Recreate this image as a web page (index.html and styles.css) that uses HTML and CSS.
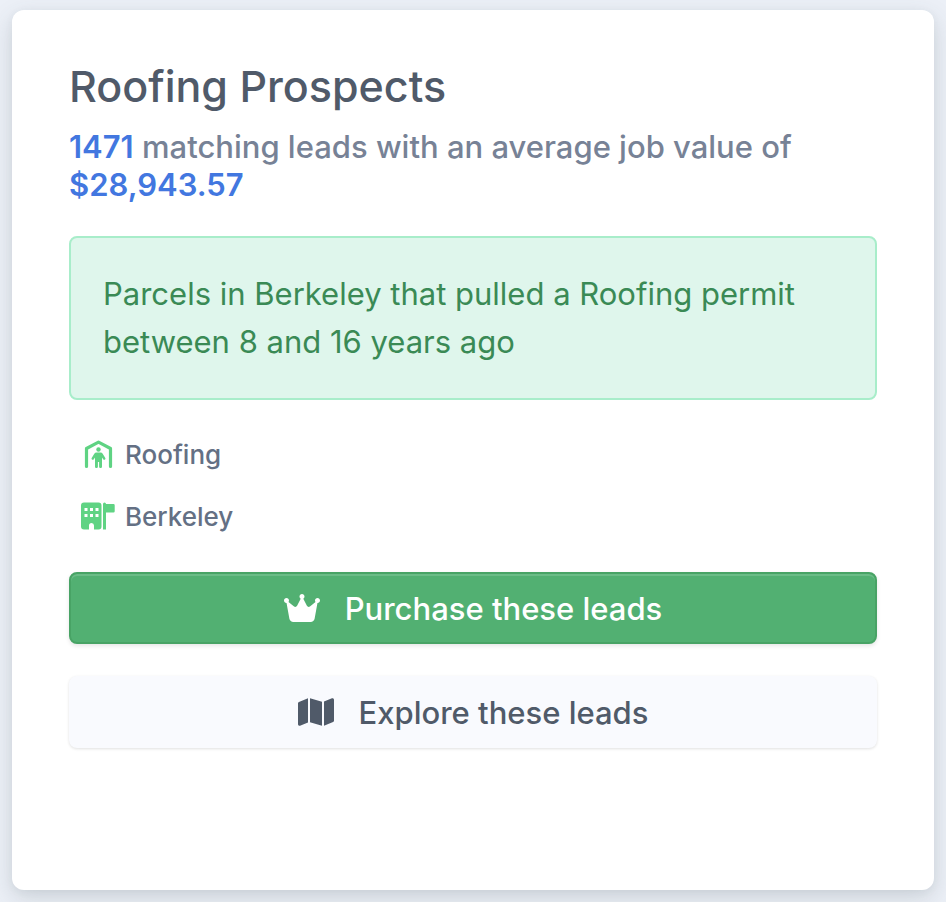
FILE: index.html
```html
<!DOCTYPE html>
<html lang="en">
<head>
<meta charset="utf-8">
<meta name="viewport" content="width=device-width, initial-scale=1">
<title>Roofing Prospects</title>
<link rel="stylesheet" href="styles.css">
</head>
<body>
<main class="card">
  <h1 class="title">Roofing Prospects</h1>
  <p class="summary"><strong>1471</strong> matching leads with an average job value of <strong>$28,943.57</strong></p>
  <p class="notice">Parcels in Berkeley that pulled a Roofing permit between 8 and 16 years ago</p>
  <ul class="tags">
    <li class="tag">
      <svg class="tag-icon" viewBox="0 1 36 32" aria-hidden="true">
        <path d="M6.500 28.500V10.500L18.500 4.200 30.500 10.500V28.500" fill="none" stroke="currentColor" stroke-width="3.200" stroke-linecap="round" stroke-linejoin="round"/>
        <circle cx="18.500" cy="11.500" r="2.200"/>
        <path d="M16.500 14.500h4c1 0 1.700.4 2.200 1.200l2.600 4.200c.8 1.400-1.200 2.700-2.100 1.400L22 19.500V28.500c0 2-2.900 2-2.900 0V24h-1.200V28.500c0 2-2.900 2-2.900 0V19.500L13.800 21.300c-.9 1.300-2.900 0-2.100-1.400l2.600-4.200c.5-.8 1.200-1.200 2.200-1.200z"/>
      </svg>
      <span>Roofing</span>
    </li>
    <li class="tag">
      <svg class="tag-icon" viewBox="0 1 36 32" aria-hidden="true">
        <path fill-rule="evenodd" d="M4 2.500H18.500a3 3 0 0 1 3 3V26.500a3 3 0 0 1-3 3H14V25.500a2.500 2.500 0 0 0-5 0V29.500H4a3 3 0 0 1-3-3V5.500a3 3 0 0 1 3-3zM4.500 8v3h3V8zm5.500 0v3h3V8zm5.500 0v3h3V8zM4.500 14v3h3v-3zm5.500 0v3h3v-3zm5.500 0v3h3v-3z"/>
        <path d="M23 4a1.500 1.500 0 0 1 3 0h7.500a1.200 1.200 0 0 1 1.200 1.200v6.100a1.200 1.200 0 0 1-1.200 1.200H26V29.500H23z"/>
      </svg>
      <span>Berkeley</span>
    </li>
  </ul>
  <div class="actions">
    <button class="button button-primary" type="button">
      <svg class="button-icon" viewBox="0 0 576 512" aria-hidden="true"><path d="M309 106c11.400-7 19-19.700 19-34c0-22.100-17.900-40-40-40s-40 17.900-40 40c0 14.400 7.600 27 19 34L209.700 220.600c-9.100 18.200-32.700 23.400-48.600 10.700L72 160c5-6.700 8-15 8-24c0-22.100-17.900-40-40-40S0 113.900 0 136s17.900 40 40 40c.2 0 .5 0 .7 0L86.400 427.400c5.500 30.400 32 52.600 63 52.600H426.600c30.900 0 57.400-22.100 63-52.600L535.300 176c.2 0 .5 0 .7 0c22.100 0 40-17.900 40-40s-17.900-40-40-40s-40 17.900-40 40c0 9 3 17.300 8 24l-89.100 71.300c-15.900 12.700-39.500 7.500-48.600-10.700L309 106z"/></svg>
      <span>Purchase these leads</span>
    </button>
    <button class="button button-secondary" type="button">
      <svg class="button-icon" viewBox="0 0 576 512" aria-hidden="true"><path d="M384 476.100L192 421.200V35.900L384 90.800V476.100zm32-1.200V88.400L543.100 37.500c15.800-6.300 32.900 5.300 32.900 22.300V394.600c0 9.800-6 18.600-15.100 22.300L416 474.800zM15.100 95.100L160 37.200V423.600L32.900 474.500C17.100 480.800 0 469.200 0 452.200V117.400c0-9.800 6-18.600 15.100-22.300z"/></svg>
      <span>Explore these leads</span>
    </button>
  </div>
</main>
</body>
</html>
```
FILE: styles.css
```css
* {
  box-sizing: border-box;
}

body {
  margin: 0;
  min-height: 100vh;
  display: flex;
  padding: 10px 12px 12px;
  background: #ecf0f7;
  color: #505a69;
  font-family: Inter, "Liberation Sans", sans-serif;
  font-size: 31px;
}

.card {
  flex: 1;
  min-width: 0;
  padding: 48px 57px;
  border-radius: 12px;
  background: #fff;
  box-shadow: 0 8px 24px rgba(60, 75, 85, 0.18), 0 2px 8px rgba(60, 75, 85, 0.05);
}

.title {
  margin: 0;
  font-size: 43px;
  font-weight: 500;
  line-height: 56px;
}

.summary {
  margin: 14px 0 32px;
  color: #778296;
  font-weight: 500;
  line-height: 38px;
}

.summary strong {
  color: #4277e0;
  font-weight: 600;
}

.notice {
  margin: 0 0 32px;
  padding: 32px;
  border: 2px solid #a8edca;
  border-radius: 8px;
  background: #dff6ec;
  color: #3a8a55;
  line-height: 48px;
}

.tags {
  display: grid;
  gap: 16px;
  margin: 0 0 32px;
  padding: 0 11px;
  list-style: none;
}

.tag {
  display: flex;
  align-items: center;
  gap: 9px;
  color: #647084;
  font-size: 26px;
  font-weight: 500;
  line-height: 46px;
}

.tag-icon {
  width: 36px;
  height: 32px;
  color: #5fd383;
  fill: currentColor;
}

.actions {
  display: grid;
  gap: 32px;
}

.button {
  display: flex;
  align-items: center;
  justify-content: center;
  gap: 25px;
  width: 100%;
  height: 72px;
  padding: 0 24px;
  border: 2px solid transparent;
  border-radius: 8px;
  font: inherit;
  font-weight: 500;
  cursor: pointer;
}

.button-primary {
  border-color: #48a365;
  background: #52b072;
  color: #fff;
  box-shadow: inset 0 2px 0 #6bbc87, 0 2px 4px rgba(0, 0, 0, 0.1);
}

.button-secondary {
  border-color: #f9fafe;
  background: #f9fafe;
  color: #505a69;
  box-shadow: 0 1px 3px rgba(0, 0, 0, 0.12);
}

.button-icon {
  width: 36px;
  height: 32px;
  fill: currentColor;
}
```
